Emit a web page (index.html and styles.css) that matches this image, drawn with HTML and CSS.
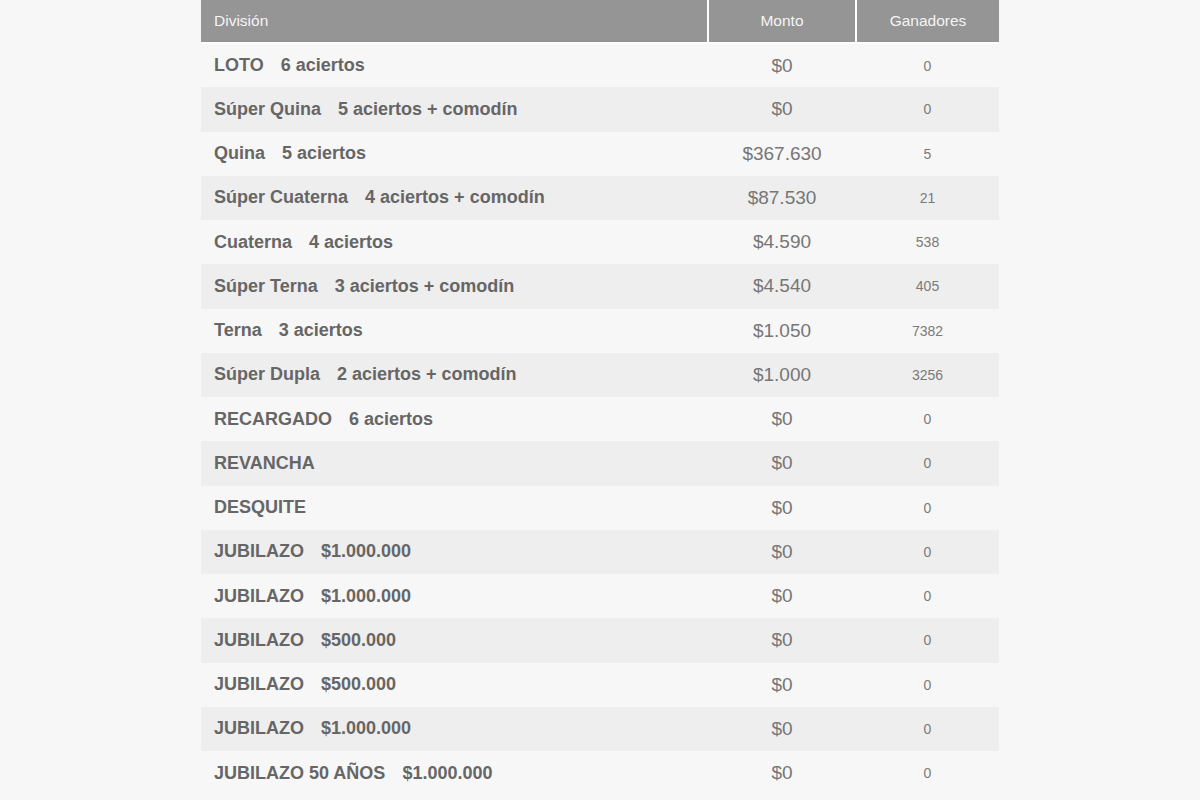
FILE: index.html
```html
<!DOCTYPE html>
<html lang="es">
<head>
<meta charset="utf-8">
<title>Resultados</title>
<link rel="stylesheet" href="styles.css">
</head>
<body>
<table class="results">
  <thead>
    <tr>
      <th class="col-div">División</th>
      <th class="col-monto">Monto</th>
      <th class="col-gan">Ganadores</th>
    </tr>
  </thead>
  <tbody>
    <tr><td class="div"><span class="name">LOTO</span> <span class="det">6 aciertos</span></td><td class="monto">$0</td><td class="gan">0</td></tr>
    <tr><td class="div"><span class="name">Súper Quina</span> <span class="det">5 aciertos + comodín</span></td><td class="monto">$0</td><td class="gan">0</td></tr>
    <tr><td class="div"><span class="name">Quina</span> <span class="det">5 aciertos</span></td><td class="monto">$367.630</td><td class="gan">5</td></tr>
    <tr><td class="div"><span class="name">Súper Cuaterna</span> <span class="det">4 aciertos + comodín</span></td><td class="monto">$87.530</td><td class="gan">21</td></tr>
    <tr><td class="div"><span class="name">Cuaterna</span> <span class="det">4 aciertos</span></td><td class="monto">$4.590</td><td class="gan">538</td></tr>
    <tr><td class="div"><span class="name">Súper Terna</span> <span class="det">3 aciertos + comodín</span></td><td class="monto">$4.540</td><td class="gan">405</td></tr>
    <tr><td class="div"><span class="name">Terna</span> <span class="det">3 aciertos</span></td><td class="monto">$1.050</td><td class="gan">7382</td></tr>
    <tr><td class="div"><span class="name">Súper Dupla</span> <span class="det">2 aciertos + comodín</span></td><td class="monto">$1.000</td><td class="gan">3256</td></tr>
    <tr><td class="div"><span class="name">RECARGADO</span> <span class="det">6 aciertos</span></td><td class="monto">$0</td><td class="gan">0</td></tr>
    <tr><td class="div"><span class="name">REVANCHA</span></td><td class="monto">$0</td><td class="gan">0</td></tr>
    <tr><td class="div"><span class="name">DESQUITE</span></td><td class="monto">$0</td><td class="gan">0</td></tr>
    <tr><td class="div"><span class="name">JUBILAZO</span> <span class="det">$1.000.000</span></td><td class="monto">$0</td><td class="gan">0</td></tr>
    <tr><td class="div"><span class="name">JUBILAZO</span> <span class="det">$1.000.000</span></td><td class="monto">$0</td><td class="gan">0</td></tr>
    <tr><td class="div"><span class="name">JUBILAZO</span> <span class="det">$500.000</span></td><td class="monto">$0</td><td class="gan">0</td></tr>
    <tr><td class="div"><span class="name">JUBILAZO</span> <span class="det">$500.000</span></td><td class="monto">$0</td><td class="gan">0</td></tr>
    <tr><td class="div"><span class="name">JUBILAZO</span> <span class="det">$1.000.000</span></td><td class="monto">$0</td><td class="gan">0</td></tr>
    <tr><td class="div"><span class="name">JUBILAZO 50 AÑOS</span> <span class="det">$1.000.000</span></td><td class="monto">$0</td><td class="gan">0</td></tr>
  </tbody>
</table>
</body>
</html>
```

FILE: styles.css
```css
html, body {
  margin: 0;
  padding: 0;
  background: #f7f7f7;
  font-family: "Liberation Sans", Arial, sans-serif;
}

.results {
  width: 798px;
  margin: 0 auto;
  border-collapse: collapse;
  table-layout: fixed;
}

.results th {
  background: #959595;
  color: #f4f4f4;
  font-weight: normal;
  font-size: 15.5px;
  height: 42px;
  padding: 0;
  border-bottom: 2px solid #ffffff;
  vertical-align: middle;
}

.results th.col-div {
  width: 493px;
  text-align: left;
  padding-left: 13px;
  border-right: 2px solid #ffffff;
}

.results th.col-monto {
  width: 146px;
  text-align: center;
  border-right: 2px solid #ffffff;
}

.results th.col-gan {
  text-align: center;
}

.results td {
  height: 44.25px;
  padding: 0;
  vertical-align: middle;
  box-sizing: border-box;
}

.results tbody tr:nth-child(even) td {
  background: #eeeeee;
}

.results td.div {
  padding-left: 13px;
  font-weight: bold;
  font-size: 18px;
  color: #666666;
  white-space: nowrap;
}

.results .det {
  margin-left: 12px;
}

.results td.monto {
  text-align: center;
  font-size: 19px;
  color: #767676;
}

.results td.gan {
  text-align: center;
  font-size: 14px;
  color: #7a7a7a;
}
```
